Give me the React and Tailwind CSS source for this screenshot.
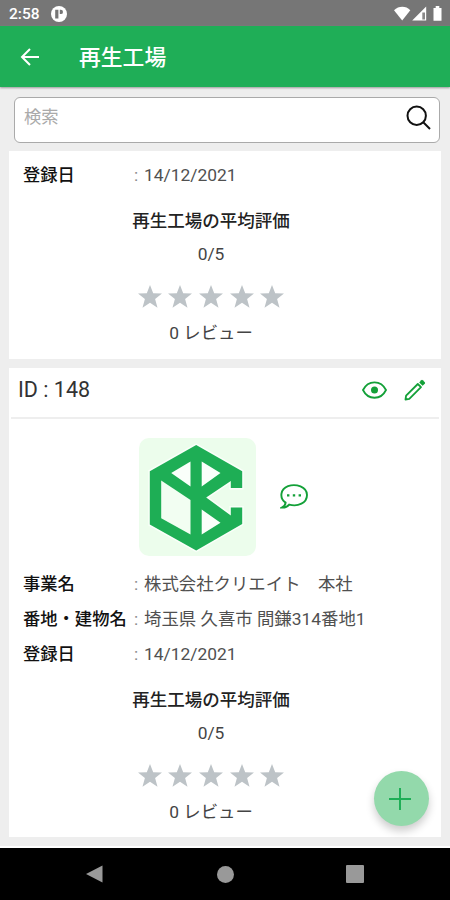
function Star() {
  return (
    <svg viewBox="0 0 24 24" className="block size-6 fill-[#bdc3c7]">
      <path d="M12 0l3.2 8.3 8.8.3-6.9 5.5 2.4 8.7L12 17.8l-7.5 5 2.4-8.7L0 8.6l8.8-.3z" />
    </svg>
  );
}

function Rating() {
  return (
    <div className="flex w-[404px] flex-col items-center">
      <div className="h-[26px] text-[17.5px] leading-[26px] font-medium whitespace-nowrap text-[#222]">再生工場の平均評価</div>
      <div className="mt-[7px] h-[26px] text-[17.4px] leading-[26px] text-[#444]">0/5</div>
      <div className="mt-[18px] flex gap-[6.7px]">
        <Star /><Star /><Star /><Star /><Star />
      </div>
      <div className="mt-[11px] h-[26px] text-[17.4px] leading-[26px] whitespace-nowrap text-[#444]">0 レビュー</div>
    </div>
  );
}

function Row({ label, children }) {
  return (
    <div className="flex h-[35px] items-center text-[17.3px] leading-[26px] whitespace-nowrap">
      <div className="w-[111px] font-medium text-[#111]">{label}</div>
      <div className="w-[10px] text-[#888]">:</div>
      <div className="text-[17.4px] text-[#505050]">{children}</div>
    </div>
  );
}

function Logo() {
  return (
    <div className="h-[118px] w-[117px] rounded-[10px] bg-[#ecfdec]">
      <svg viewBox="138.5 437.5 117 118" className="block h-full w-full">
        <path
          d="M195.7 444.5 241.7 470.7V487.5H230.3V480.5L205.7 497 230.3 515V507H241.7V523.5L195.7 550 149.3 524V470.7Z"
          fill="#1eae55" stroke="#fff" strokeOpacity="0.7" strokeWidth="3" paintOrder="stroke"
        />
        <path d="M190 461V486L170.7 472.5ZM201.2 461V486L220 472.5ZM201.2 517V534L220 522.3L201.2 509Z" fill="#fafffa" />
        <path d="M160.7 480 190 499.5V534L160.7 517.7Z" fill="#f2fef2" />
      </svg>
    </div>
  );
}

export default function App() {
  return (
    <div className="flex h-[900px] w-[450px] flex-col overflow-hidden bg-[#eeeeee] font-[Roboto,'Noto_Sans_CJK_JP',sans-serif]">
      <div className="flex h-[26px] shrink-0 items-center bg-[#767676] pt-[2px] pl-[9px] text-white">
        <span className="w-[42px] pt-px text-[15.5px] leading-none font-medium">2:58</span>
        <svg viewBox="0 0 16 16" className="size-4">
          <circle cx="8" cy="8" r="8" fill="#fff" />
          <path d="M4.2 3.7h3.2v8.7H4.2zM8.8 3.7h1a2.2 2.2 0 0 1 0 4.4h-1z" fill="#767676" />
        </svg>
        <svg viewBox="0 0 52 18" className="ml-[326px] h-[18px] w-[52px]" fill="#fff">
          <path d="M1 5.2C5.7.7 13 .7 17.3 5.2L9.2 15.5z" />
          <path d="M33.2 1.5V15.5H19.2z" />
          <path d="M29.3 7.5H32v7h-2.7z" fill="#888" />
          <path d="M40.5 3h2.2V1h3.6v2h2.2v12.8h-8z" />
        </svg>
      </div>
      <div className="flex h-[61px] shrink-0 items-center bg-[#1fae57] pl-5 text-white shadow-[0_1px_2px_#999]">
        <svg viewBox="0 0 20 18" className="mt-px h-[18px] w-5" fill="none" stroke="#fff" strokeWidth="2">
          <path d="M19 9H2M10 1 2 9l8 8" />
        </svg>
        <h1 className="mt-[3px] ml-[39px] text-[21.8px] leading-[30px] font-medium">再生工場</h1>
      </div>
      <div className="mt-[10px] ml-[14px] flex h-[46px] w-[426px] shrink-0 items-center justify-between rounded-[6px] border border-[#aaa] bg-white pr-2 pb-[5px] pl-[9px]">
        <span className="text-[17.3px] text-[#aaa]">検索</span>
        <svg viewBox="0 0 25 25" className="size-[25px]" fill="none" stroke="#111" strokeWidth="2">
          <circle cx="10.7" cy="10.7" r="9.2" /><path d="M17 17l7 7" />
        </svg>
      </div>
      <div className="mt-2 ml-[9px] h-[208px] w-[432px] shrink-0 bg-white pt-[6px] pl-[14px]">
        <Row label="登録日">14/12/2021</Row>
        <div className="-ml-[14px] pt-[16px]"><Rating /></div>
      </div>
      <div className="mt-[9px] ml-[9px] h-[469px] w-[432px] shrink-0 bg-white">
        <div className="mx-[2px] flex h-[51px] items-center border-b-2 border-[#eee] pr-[13px] pb-[5px] pl-[7px]">
          <span className="grow pt-px text-[21.5px] text-[#333]">ID : 148</span>
          <svg viewBox="0 0 25 18" className="mr-[17px] h-[18px] w-[25px]" fill="none" stroke="#13a038" strokeWidth="1.8">
            <path d="M1 9C6-1.3 19-1.3 24 9 19 19.3 6 19.3 1 9z" /><circle cx="12.5" cy="9" r="3.5" fill="#13a038" stroke="none" />
          </svg>
          <svg viewBox="0 0 22 22" className="size-[22px]" fill="none" stroke="#13a038" strokeWidth="1.8">
            <path d="M1.5 20.5 2.1 16.7 13.8 5 17 8.2 5.3 19.9z" strokeLinejoin="round" />
            <path d="M15.2 3.4 17.2 1.2Q18 .5 18.8 1.2L20.8 3.2Q21.5 4 20.8 4.8L18.6 6.8z" fill="#13a038" stroke="none" />
          </svg>
        </div>
        <div className="flex items-center pt-[19px] pl-[129.5px]">
          <Logo />
          <svg viewBox="0 0 28 25" className="ml-6 h-[25px] w-7 -translate-y-px" fill="none" stroke="#13a038" strokeWidth="1.9">
            <path d="M5.6 18.6C-1 14 .4 5 8 2.2 16-.8 27 3 27 11S18 23 9.2 20.6C7.5 22.6 4.5 23.8 1.8 23.6 4.3 22.4 5.5 20.8 5.6 18.6z" />
            <path d="M7 10.2h2.4v2.4H7zM12.8 10.2h2.4v2.4h-2.4zM18.6 10.2H21v2.4h-2.4z" fill="#13a038" stroke="none" />
          </svg>
        </div>
        <div className="pt-[10px] pl-[14px]">
          <Row label="事業名">株式会社クリエイト　本社</Row>
          <Row label="番地・建物名">埼玉県 久喜市 間鎌314番地1</Row>
          <Row label="登録日">14/12/2021</Row>
        </div>
        <div className="pt-[16px]"><Rating /></div>
      </div>
      <div className="relative mt-[9px] h-[54px] shrink-0 border-t-2 border-white bg-black">
        <div className="absolute -top-[77px] left-[373.5px] flex size-[55px] items-center justify-center rounded-full bg-[#93d9ab] pr-[2px] shadow-[0_5px_8px_rgba(0,0,0,0.2)]">
          <svg viewBox="0 0 22 22" className="size-[22px]" stroke="#1fae57" strokeWidth="2"><path d="M11 0v22M0 11h22" /></svg>
        </div>
        <div className="flex h-[52px] items-center pl-[86px]">
          <svg viewBox="0 0 17 18" className="h-[18px] w-[17px]" fill="#999"><path d="M16.5.5v17L0 9z" /></svg>
          <div className="ml-[114px] size-[17px] rounded-full bg-[#999]" />
          <div className="ml-[112px] size-[18px] rounded-[1px] bg-[#999]" />
        </div>
      </div>
    </div>
  );
}
